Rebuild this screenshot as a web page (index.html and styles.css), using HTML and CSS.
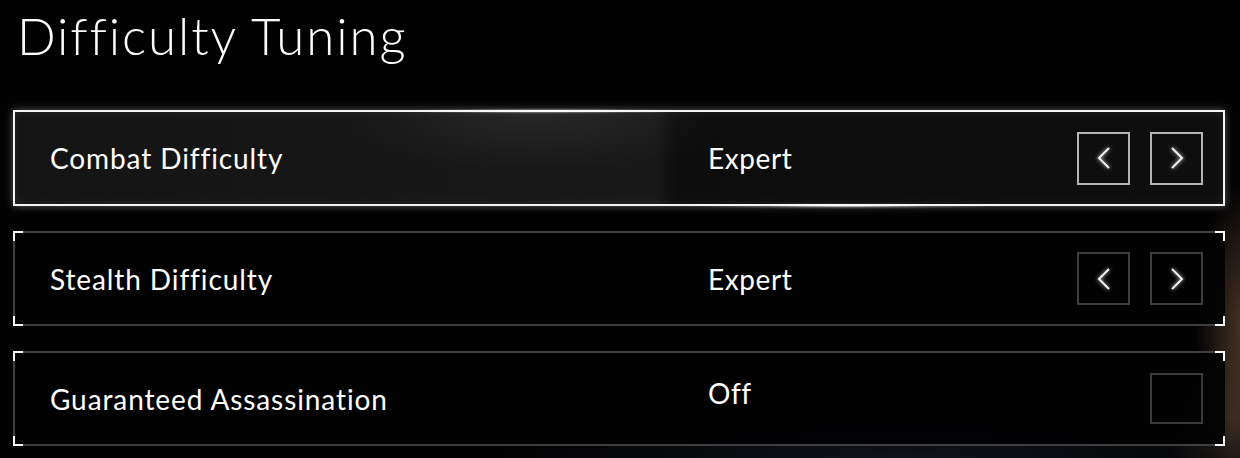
FILE: index.html
```html
<!DOCTYPE html>
<html>
<head>
<meta charset="utf-8">
<link rel="stylesheet" href="styles.css">
</head>
<body>
<div class="page">
  <h1 class="title">Difficulty Tuning</h1>
  <div class="rows">
    <div class="row row-active">
      <span class="glow glow-top"></span>
      <span class="glow glow-bottom"></span>
      <div class="label">Combat Difficulty</div>
      <div class="value">Expert</div>
      <div class="controls">
        <div class="btn btn-active"><svg viewBox="0 0 14 22" class="chev"><path d="M12 1 L2 11 L12 21"/></svg></div>
        <div class="btn btn-active"><svg viewBox="0 0 14 22" class="chev"><path d="M2 1 L12 11 L2 21"/></svg></div>
      </div>
    </div>
    <div class="row row-idle">
      <span class="corner tl"></span><span class="corner bl"></span><span class="corner tr"></span><span class="corner br"></span>
      <div class="label">Stealth Difficulty</div>
      <div class="value">Expert</div>
      <div class="controls">
        <div class="btn"><svg viewBox="0 0 14 22" class="chev"><path d="M12 1 L2 11 L12 21"/></svg></div>
        <div class="btn"><svg viewBox="0 0 14 22" class="chev"><path d="M2 1 L12 11 L2 21"/></svg></div>
      </div>
    </div>
    <div class="row row-idle">
      <span class="corner tl"></span><span class="corner bl"></span><span class="corner tr"></span><span class="corner br"></span>
      <div class="label">Guaranteed Assassination</div>
      <div class="value value-off">Off</div>
      <div class="controls">
        <div class="check"></div>
      </div>
    </div>
  </div>
</div>
</body>
</html>
```
FILE: styles.css
```css
html, body {
  margin: 0;
  padding: 0;
  height: 100%;
}
body {
  background:
    radial-gradient(ellipse 50px 150px at 1245px 330px, rgba(120,88,62,0.6), rgba(0,0,0,0) 100%),
    radial-gradient(ellipse 70px 80px at 1235px 420px, rgba(100,78,60,0.4), rgba(0,0,0,0) 100%),
    radial-gradient(ellipse 400px 60px at 900px 458px, rgba(30,36,48,0.5), rgba(0,0,0,0) 100%),
    #020203;
  font-family: "Lato", "Liberation Sans", sans-serif;
  color: #ffffff;
  overflow: hidden;
}
.page {
  padding: 0 15px 0 13px;
}
.title {
  margin: 0;
  padding: 6px 0 0 4px;
  height: 60px;
  font-size: 51px;
  line-height: 60px;
  font-weight: 300;
  letter-spacing: 1.9px;
  margin-bottom: 44px;
}
.rows {
  display: flex;
  flex-direction: column;
  gap: 25px;
}
.row {
  position: relative;
  height: 96px;
  box-sizing: border-box;
  display: grid;
  grid-template-columns: 658px 1fr auto;
  align-items: center;
  padding: 0 20px 0 35px;
  font-size: 28px;
}
.row-active {
  border: 2px solid #f4f4f4;
  background:
    radial-gradient(ellipse 200px 60px at 520px 0, rgba(255,255,255,0.07), rgba(255,255,255,0) 100%),
    linear-gradient(to right, #141414 0, #181818 640px, #0d0d0d 661px, #0e0e0e 100%);
  box-shadow: 0 0 8px rgba(255,255,255,0.35), inset 0 0 10px rgba(255,255,255,0.08);
}
.row-idle {
  border: 2px solid #3f3f3f;
  border-right-color: transparent;
  background: rgba(2,2,3,0.92);
  height: 95px;
  padding-left: 35px;
}
.label {
  letter-spacing: 0.9px;
}
.value {
  letter-spacing: 0.6px;
}
.value-off {
  margin-top: -12px;
}
.controls {
  display: flex;
  gap: 20px;
}
.btn, .check {
  width: 53px;
  height: 53px;
  box-sizing: border-box;
  border: 2px solid #3d3d3d;
  display: flex;
  align-items: center;
  justify-content: center;
}
.check {
  height: 51px;
  border-color: #3a3a3a;
}
.btn-active {
  border-color: #b4b4b4;
}
.chev {
  width: 14px;
  height: 22px;
  overflow: visible;
  filter: drop-shadow(0 0 2px rgba(255,255,255,0.8));
}
.chev path {
  fill: none;
  stroke: #f2f2f2;
  stroke-width: 2;
}
.corner {
  position: absolute;
  width: 8px;
  height: 8px;
  border-color: #ffffff;
  border-style: solid;
  border-width: 0;
}
.corner.tl { left: -2px; top: -2px; border-left-width: 2px; border-top-width: 2px; }
.corner.bl { left: -2px; bottom: -2px; border-left-width: 2px; border-bottom-width: 2px; }
.corner.tr { right: -2px; top: -2px; border-right-width: 2px; border-top-width: 2px; }
.corner.br { right: -2px; bottom: -2px; border-right-width: 2px; border-bottom-width: 2px; }
.glow {
  position: absolute;
  height: 6px;
  pointer-events: none;
}
.glow-top {
  left: 380px;
  width: 300px;
  top: -4px;
  background: radial-gradient(ellipse at center, rgba(255,255,255,0.9) 0, rgba(255,255,255,0.25) 35%, rgba(255,255,255,0) 70%);
}
.glow-bottom {
  left: 660px;
  width: 340px;
  bottom: -5px;
  background: radial-gradient(ellipse at center, rgba(255,255,255,0.8) 0, rgba(255,255,255,0.2) 35%, rgba(255,255,255,0) 70%);
}
```
